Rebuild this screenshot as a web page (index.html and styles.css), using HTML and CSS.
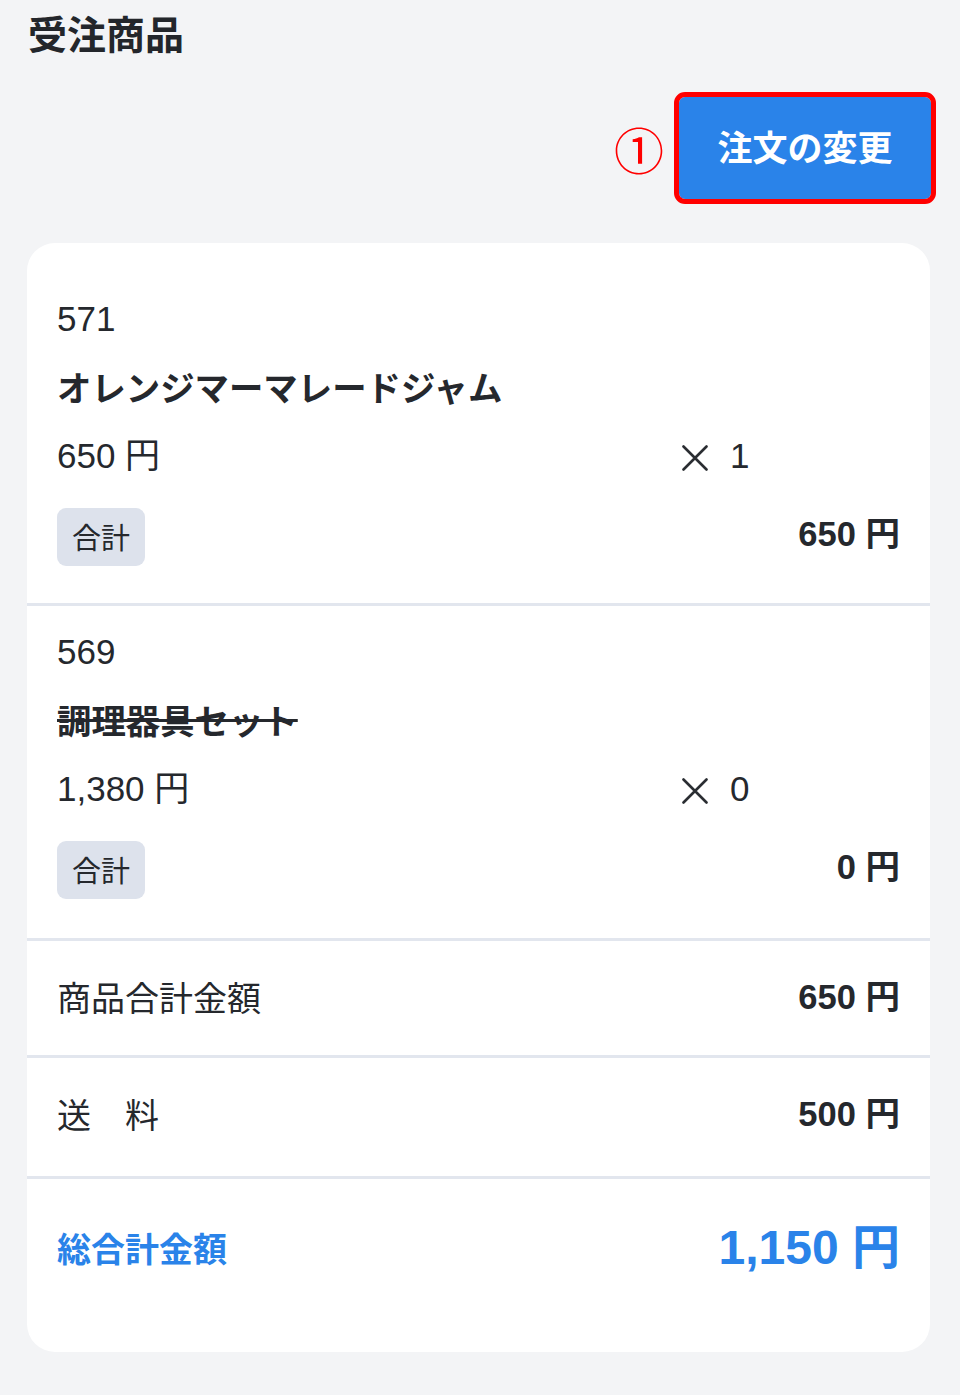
FILE: index.html
```html
<!DOCTYPE html>
<html lang="ja">
<head>
<meta charset="utf-8">
<title>受注商品</title>
<link rel="stylesheet" href="styles.css">
</head>
<body>
<div class="page">
  <h1 class="title">受注商品</h1>
  <div class="actions">
    <span class="marker">①</span>
    <button class="btn-change" type="button">注文の変更</button>
  </div>
  <div class="card">
    <div class="item">
      <div class="item-no">571</div>
      <div class="item-name">オレンジマーマレードジャム</div>
      <div class="price-row">
        <span class="unit">650 円</span>
        <span class="qty"><svg class="times" viewBox="0 0 26 26" width="26" height="26" aria-hidden="true"><path d="M1.5 1.5 L24.5 24.5 M24.5 1.5 L1.5 24.5"/></svg><span class="qty-num">1</span></span>
      </div>
      <div class="subtotal-row">
        <span class="tag">合計</span>
        <span class="subtotal">650 円</span>
      </div>
    </div>
    <div class="item item-second">
      <div class="item-no">569</div>
      <div class="item-name struck">調理器具セット</div>
      <div class="price-row">
        <span class="unit">1,380 円</span>
        <span class="qty"><svg class="times" viewBox="0 0 26 26" width="26" height="26" aria-hidden="true"><path d="M1.5 1.5 L24.5 24.5 M24.5 1.5 L1.5 24.5"/></svg><span class="qty-num">0</span></span>
      </div>
      <div class="subtotal-row">
        <span class="tag">合計</span>
        <span class="subtotal">0 円</span>
      </div>
    </div>
    <div class="sum-row sum-goods">
      <span class="sum-label">商品合計金額</span>
      <span class="sum-value">650 円</span>
    </div>
    <div class="sum-row sum-ship">
      <span class="sum-label">送　料</span>
      <span class="sum-value">500 円</span>
    </div>
    <div class="sum-row sum-total">
      <span class="total-label">総合計金額</span>
      <span class="total-value">1,150 円</span>
    </div>
  </div>
</div>
</body>
</html>
```
FILE: styles.css
```css
html, body {
  margin: 0;
  padding: 0;
  background: #f3f4f6;
}
body {
  font-family: "Liberation Sans", "Noto Sans CJK JP", sans-serif;
  color: #25282d;
}
.page {
  width: 960px;
  height: 1395px;
  box-sizing: border-box;
  padding: 8px 30px 0 27px;
}
.title {
  margin: 0 0 0 1px;
  font-family: "Noto Sans CJK JP", sans-serif;
  font-size: 39px;
  font-weight: 700;
  line-height: 48px;
  color: #23262b;
}
.actions {
  display: flex;
  justify-content: flex-end;
  align-items: center;
  margin-top: 41px;
}
.marker {
  font-family: "Noto Sans CJK JP", sans-serif;
  font-weight: 400;
  font-size: 50px;
  line-height: 1;
  color: #f00;
  margin-right: 15px;
}
.btn-change {
  width: 252px;
  height: 102px;
  border: 0;
  border-radius: 6px;
  background: #2a83e9;
  color: #fff;
  font-family: "Noto Sans CJK JP", sans-serif;
  font-weight: 700;
  font-size: 35px;
  padding: 0 0 5px;
  outline: 5px solid #ff0000;
  outline-offset: 0;
  margin-right: -1px;
}
.card {
  margin-top: 44px;
  background: #fff;
  border-radius: 28px;
  padding: 30px 0 0;
  overflow: hidden;
}
.item {
  padding: 18px 30px 37px;
  border-bottom: 3px solid #e2e6ee;
}
.item-second {
  padding-bottom: 39px;
}
.item-no {
  font-size: 35px;
  line-height: 56px;
}
.item-name {
  margin-top: 11px;
  font-family: "Noto Sans CJK JP", sans-serif;
  font-weight: 700;
  font-size: 34.4px;
  line-height: 56px;
}
.struck {
  text-decoration: line-through;
  text-decoration-thickness: 3px;
}
.price-row {
  margin-top: 14px;
  display: grid;
  grid-template-columns: 625px 1fr;
  font-size: 35px;
  line-height: 56px;
}
.unit {
  white-space: nowrap;
}
.qty {
  display: flex;
  align-items: center;
  white-space: nowrap;
}
.times {
  fill: none;
  stroke: #2a2d32;
  stroke-width: 2.6;
  stroke-linecap: round;
  margin-top: 4px;
}
.qty-num {
  margin-left: 22px;
}
.subtotal-row {
  margin-top: 24px;
  display: flex;
  justify-content: space-between;
  align-items: center;
}
.tag {
  display: inline-block;
  height: 58px;
  line-height: 56px;
  padding: 0 15px;
  border-radius: 9px;
  background: #dde2ec;
  font-family: "Noto Sans CJK JP", sans-serif;
  font-size: 29px;
}
.subtotal {
  font-size: 34.5px;
  font-weight: 700;
  margin-top: -12px;
}
.sum-row {
  display: flex;
  justify-content: space-between;
  align-items: center;
  padding: 28px 30px 30px;
  line-height: 56px;
  border-bottom: 3px solid #e2e6ee;
}
.sum-ship {
  padding-bottom: 34px;
}
.sum-total {
  border-bottom: 0;
  padding: 41px 30px 76px;
}
.sum-label {
  font-family: "Noto Sans CJK JP", sans-serif;
  font-size: 34px;
}
.sum-value {
  font-size: 34.5px;
  font-weight: 700;
}
.total-label {
  font-family: "Noto Sans CJK JP", sans-serif;
  font-size: 34px;
  font-weight: 700;
  color: #2a83e9;
}
.total-value {
  font-size: 48px;
  font-weight: 700;
  color: #2a83e9;
}
```
